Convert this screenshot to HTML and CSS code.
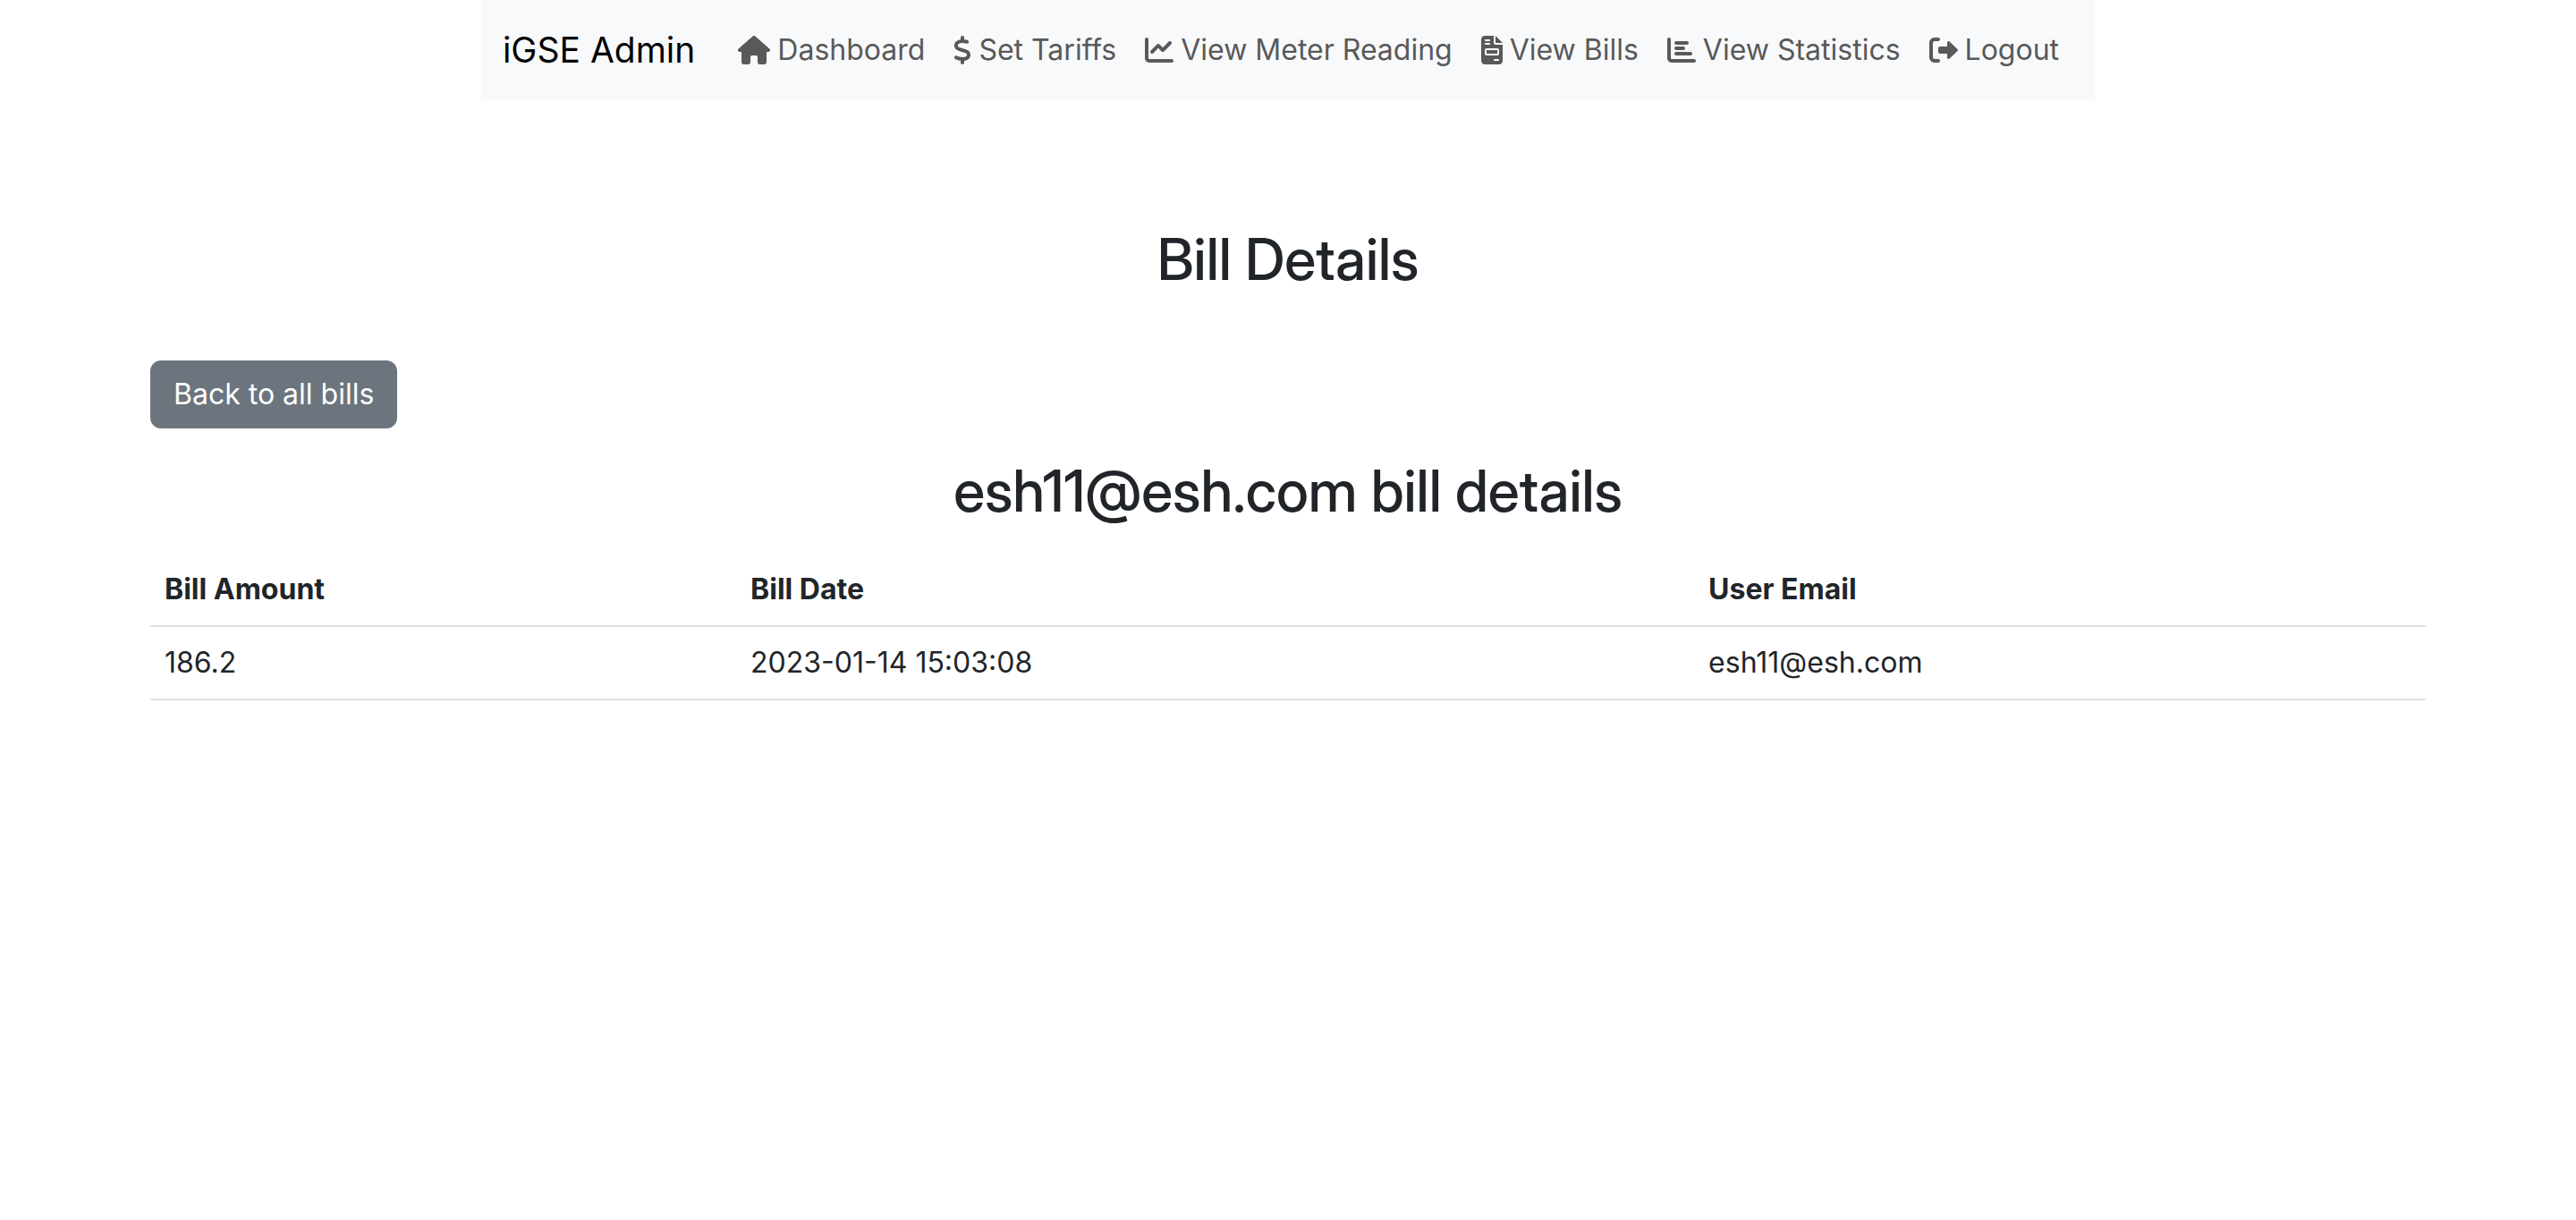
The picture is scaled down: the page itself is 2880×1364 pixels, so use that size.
FILE: index.html
```html
<!DOCTYPE html>
<html lang="en">
<head>
<meta charset="utf-8">
<meta name="viewport" content="width=device-width, initial-scale=1">
<title>iGSE Admin - Bill Details</title>
<link rel="stylesheet" href="styles.css">
</head>
<body>
<header class="site-header">
  <nav class="navbar" aria-label="Main">
    <a class="brand" href="#">iGSE Admin</a>
    <ul class="nav-list">
      <li><a class="nav-link" href="#"><svg class="icon" viewBox="0 0 576 512" width="36" height="32" aria-hidden="true"><path d="M575.8 255.500c0 18-15 32.100-32 32.100h-32l.7 160.200c0 2.700-.2 5.400-.5 8.100V472c0 22.100-17.900 40-40 40H456c-1.100 0-2.200 0-3.300-.1c-1.400 .1-2.800 .1-4.200 .1H416 392c-22.100 0-40-17.900-40-40V448 384c0-17.700-14.300-32-32-32H256c-17.700 0-32 14.300-32 32v64 24c0 22.100-17.900 40-40 40H160 128.100c-1.500 0-3-.1-4.500-.2c-1.200 .1-2.400 .2-3.600 .2H104c-22.100 0-40-17.900-40-40V360c0-.9 0-1.900 .1-2.800V287.600H32c-18 0-32-14-32-32.100c0-9 3-17 10-24L266.400 8c7-7 15-8 22-8s15 2 21 7L564.800 231.500c8 7 12 15 11 24z"/></svg>Dashboard</a></li>
      <li><a class="nav-link" href="#"><svg class="icon" viewBox="0 0 320 512" width="20" height="32" aria-hidden="true"><path d="M160 0c17.700 0 32 14.300 32 32V67.700c1.600 .2 3.100 .4 4.700 .7c.4 .1 .7 .1 1.100 .2l48 8.800c17.400 3.200 28.900 19.900 25.700 37.200s-19.900 28.900-37.200 25.700l-47.500-8.700c-31.300-4.600-58.900-1.500-78.300 6.200s-27.200 18.300-29 28.100c-2 10.700-.5 16.700 1.200 20.400c1.800 3.900 5.500 8.300 12.800 13.200c16.300 10.700 41.300 17.700 73.700 26.300l2.900 .8c28.600 7.600 63.600 16.800 89.600 33.800c14.200 9.300 27.600 21.900 35.900 39.500c8.500 17.900 10.300 37.900 6.400 59.200c-6.900 38-33.100 63.400-65.600 76.700c-13.700 5.600-28.600 9.200-44.400 11V480c0 17.700-14.300 32-32 32s-32-14.300-32-32V445.100c-.4-.1-.9-.1-1.300-.2l-.2 0 0 0c-24.400-3.800-64.500-14.300-91.500-26.300c-16.100-7.200-23.400-26.100-16.200-42.200s26.100-23.400 42.200-16.200c20.900 9.300 55.300 18.500 75.200 21.600c31.900 4.700 58.200 2 76-5.300c16.900-6.900 24.600-16.900 26.800-28.900c1.900-10.600 .4-16.700-1.300-20.400c-1.900-4-5.600-8.400-13-13.300c-16.400-10.700-41.500-17.700-74-26.300l-2.800-.7 0 0C119.400 279.300 84.400 270 58.400 253c-14.200-9.300-27.500-22-35.800-39.600c-8.400-17.900-10.100-37.900-6.100-59.200C23.700 116 52.300 91.200 84.800 78.300c13.300-5.300 27.900-8.900 43.200-11V32c0-17.700 14.300-32 32-32z"/></svg>Set Tariffs</a></li>
      <li><a class="nav-link" href="#"><svg class="icon" viewBox="0 0 512 512" width="32" height="32" aria-hidden="true"><path d="M64 64c0-17.700-14.300-32-32-32S0 46.300 0 64V400c0 44.200 35.800 80 80 80H480c17.700 0 32-14.300 32-32s-14.300-32-32-32H80c-8.800 0-16-7.200-16-16V64zm406.600 86.600c12.500-12.500 12.500-32.800 0-45.300s-32.800-12.500-45.300 0L320 210.700l-57.400-57.400c-12.500-12.500-32.800-12.500-45.300 0l-112 112c-12.500 12.500-12.500 32.800 0 45.300s32.800 12.500 45.300 0L240 221.300l57.400 57.400c12.500 12.500 32.800 12.500 45.300 0l128-128z"/></svg>View Meter Reading</a></li>
      <li><a class="nav-link" href="#"><svg class="icon" viewBox="0 0 384 512" width="24" height="32" aria-hidden="true"><path d="M64 0C28.700 0 0 28.700 0 64V448c0 35.300 28.700 64 64 64H320c35.300 0 64-28.700 64-64V160H256c-17.700 0-32-14.300-32-32V0H64zM256 0V128H384L256 0zM80 64h64c8.800 0 16 7.200 16 16s-7.200 16-16 16H80c-8.800 0-16-7.200-16-16s7.200-16 16-16zm0 64h64c8.800 0 16 7.200 16 16s-7.200 16-16 16H80c-8.800 0-16-7.200-16-16s7.200-16 16-16zm16 96H288c17.700 0 32 14.300 32 32v64c0 17.700-14.300 32-32 32H96c-17.700 0-32-14.300-32-32V256c0-17.700 14.300-32 32-32zm0 32v64H288V256H96zM240 416h64c8.800 0 16 7.200 16 16s-7.200 16-16 16H240c-8.800 0-16-7.200-16-16s7.200-16 16-16z"/></svg>View Bills</a></li>
      <li><a class="nav-link" href="#"><svg class="icon" viewBox="0 0 512 512" width="32" height="32" aria-hidden="true"><path d="M32 32c17.700 0 32 14.300 32 32V400c0 8.800 7.200 16 16 16H480c17.700 0 32 14.300 32 32s-14.300 32-32 32H80c-44.200 0-80-35.800-80-80V64C0 46.300 14.300 32 32 32zm96 96c0-17.700 14.300-32 32-32l192 0c17.700 0 32 14.300 32 32s-14.300 32-32 32l-192 0c-17.700 0-32-14.300-32-32zm32 64H288c17.700 0 32 14.300 32 32s-14.300 32-32 32H160c-17.700 0-32-14.300-32-32s14.300-32 32-32zm0 96H416c17.700 0 32 14.300 32 32s-14.300 32-32 32H160c-17.700 0-32-14.300-32-32s14.300-32 32-32z"/></svg>View Statistics</a></li>
      <li><a class="nav-link" href="#"><svg class="icon" viewBox="0 0 512 512" width="32" height="32" aria-hidden="true"><path d="M160 96c17.700 0 32-14.300 32-32s-14.300-32-32-32H96C43 32 0 75 0 128V384c0 53 43 96 96 96h64c17.700 0 32-14.300 32-32s-14.300-32-32-32H96c-17.700 0-32-14.300-32-32V128c0-17.700 14.300-32 32-32h64zM504.500 273.400c4.800-4.500 7.500-10.800 7.500-17.400s-2.700-12.900-7.500-17.400l-144-136c-7-6.600-17.200-8.400-26-4.600s-14.500 12.400-14.500 22v72H192c-17.700 0-32 14.300-32 32l0 64c0 17.700 14.300 32 32 32H320v72c0 9.600 5.700 18.200 14.500 22s19 2 26-4.600l144-136z"/></svg>Logout</a></li>
    </ul>
  </nav>
</header>
<main class="container">
  <h1 class="heading page-heading">Bill Details</h1>
  <button class="btn" type="button">Back to all bills</button>
  <h2 class="heading">esh11@esh.com bill details</h2>
  <table class="table">
    <colgroup><col class="col-amount"><col class="col-date"><col class="col-email"></colgroup>
    <thead>
      <tr><th scope="col">Bill Amount</th><th scope="col">Bill Date</th><th scope="col">User Email</th></tr>
    </thead>
    <tbody>
      <tr><td>186.2</td><td>2023-01-14 15:03:08</td><td>esh11@esh.com</td></tr>
    </tbody>
  </table>
</main>
</body>
</html>
```

FILE: styles.css
```css
*,
*::before,
*::after {
  box-sizing: border-box;
}

body {
  margin: 0;
  background: #fff;
  color: #212529;
  font-family: Inter, "Liberation Sans", sans-serif;
  font-size: 32px;
  line-height: 48px;
}

.site-header {
  display: flex;
  justify-content: center;
}

.navbar {
  display: flex;
  align-items: center;
  padding: 16px 24px;
  background: #f8f9fb;
}

.brand {
  margin-right: 32px;
  color: #000;
  font-size: 39px;
  line-height: 60px;
  text-decoration: none;
}

.nav-list {
  display: flex;
  margin: 0;
  padding: 0;
  list-style: none;
}

.nav-link {
  display: flex;
  align-items: center;
  gap: 8px;
  padding: 16px;
  color: #595959;
  text-decoration: none;
  white-space: nowrap;
}

.icon {
  flex: none;
  fill: currentColor;
}

.container {
  max-width: 2640px;
  margin: 0 auto;
  padding: 140px 48px 0;
}

.heading {
  margin: 32px 0;
  font-family: "Inter Display", Inter, "Liberation Sans", sans-serif;
  font-size: 64px;
  font-weight: 500;
  font-variation-settings: "opsz" 32;
  line-height: 76px;
  text-align: center;
}

.page-heading {
  margin: 0 0 75px;
}

.btn {
  display: block;
  padding: 12px 24px;
  border: 2px solid #6c757d;
  border-radius: 12px;
  background: #6c757d;
  color: #fff;
  font: inherit;
}

.table {
  width: 100%;
  border-collapse: collapse;
  text-align: left;
}

.table th,
.table td {
  padding: 16px;
  border-bottom: 2px solid #dee2e6;
}

.table th {
  font-weight: 700;
}

.col-amount {
  width: 25.75%;
}

.col-date {
  width: 42.1%;
}
```
